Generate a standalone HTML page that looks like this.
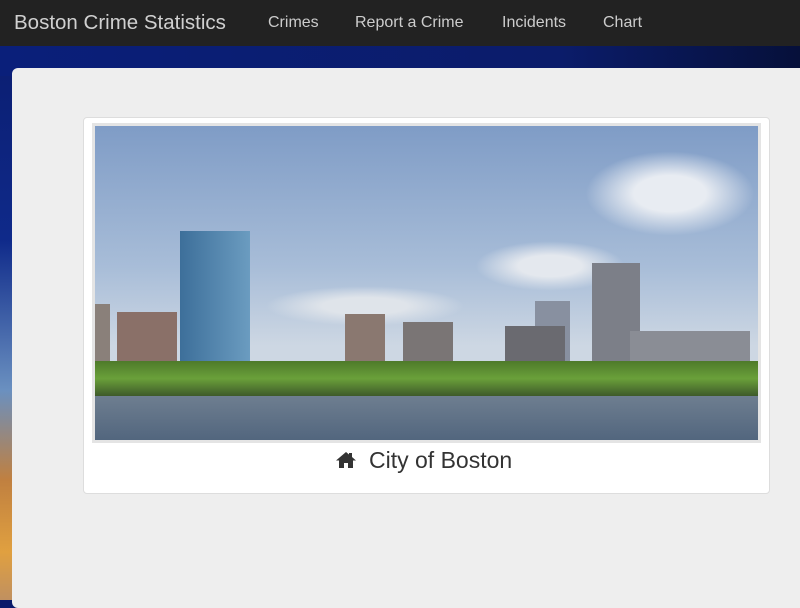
<!DOCTYPE html>
<html><head><style>
body{margin:0;width:800px;height:600px;overflow:hidden;font-family:"Liberation Sans",sans-serif;background:linear-gradient(180deg,#0a1a6a 0%,#0f2a8a 40%,#6a90c0 65%,#c08040 80%,#e0a040 92%,#c09060 100%);position:relative}
.nav{position:absolute;left:0;top:0;width:800px;height:46px;background:#222;box-shadow:0 1px 2px #000}
.nav span{position:absolute;top:14px;color:#ccc;font-size:16px}
.brand{left:14px!important;top:11px!important;font-size:20.5px!important;color:#d0d0d0!important}
.band{position:absolute;left:0;top:46px;width:800px;height:30px;background:linear-gradient(90deg,#0a1f7a,#0b1c6a 70%,#06103a)}
.panel{position:absolute;left:12px;top:68px;width:800px;height:540px;background:#eee;border-radius:6px}
.card{position:absolute;left:83px;top:117px;width:685px;height:375px;background:#fff;border:1px solid #ddd;border-radius:4px}
.img{position:absolute;left:95px;top:126px;width:663px;height:314px;overflow:hidden;background:linear-gradient(180deg,#7f9cc6 0%,#a8bdd8 45%,#cdd7e3 70%);outline:3px solid #e4e4e4}
.img div{position:absolute}
.cap{position:absolute;left:335px;top:447px;font-size:23px;color:#333}
</style></head><body>
<div class="nav">
<span class="brand">Boston Crime Statistics</span>
<span style="left:268px">Crimes</span>
<span style="left:355px">Report a Crime</span>
<span style="left:502px">Incidents</span>
<span style="left:603px">Chart</span>
</div>
<div class="band"></div>
<div class="panel"></div>
<div class="card"></div>
<div class="img">
<div style="left:490px;top:25px;width:170px;height:85px;background:radial-gradient(ellipse,#e8ecf2 30%,transparent 70%)"></div>
<div style="left:380px;top:115px;width:150px;height:50px;background:radial-gradient(ellipse,#e4e8ee 30%,transparent 70%)"></div>
<div style="left:170px;top:160px;width:200px;height:40px;background:radial-gradient(ellipse,#dfe4ea 30%,transparent 70%)"></div>
<div style="left:85px;top:105px;width:70px;height:130px;background:linear-gradient(90deg,#3d6f9a,#6b9cc0)"></div>
<div style="left:497px;top:137px;width:48px;height:100px;background:#7c7f88"></div>
<div style="left:440px;top:175px;width:35px;height:60px;background:#8890a0"></div>
<div style="left:250px;top:188px;width:40px;height:50px;background:#8a7870"></div>
<div style="left:308px;top:196px;width:50px;height:45px;background:#7a7575"></div>
<div style="left:0;top:178px;width:15px;height:60px;background:#8a807a"></div>
<div style="left:22px;top:186px;width:60px;height:50px;background:#8a7068"></div>
<div style="left:410px;top:200px;width:60px;height:40px;background:#6a6a70"></div>
<div style="left:535px;top:205px;width:120px;height:35px;background:#8a8d95"></div>
<div style="left:0;top:235px;width:663px;height:35px;background:linear-gradient(180deg,#4e7a2a,#6aa03a 50%,#3e5a2a)"></div>
<div style="left:0;top:270px;width:663px;height:44px;background:linear-gradient(180deg,#6e7e90,#52667e)"></div>
</div>
<div class="cap"><svg width="22" height="18" viewBox="0 0 22 18" style="vertical-align:-1px;margin-right:12px"><path d="M11 1L1 9.5h3V17h5v-5h4v5h5V9.5h3L17 6V2h-3v1.5z" fill="#333"/></svg>City of Boston</div>
</body></html>
